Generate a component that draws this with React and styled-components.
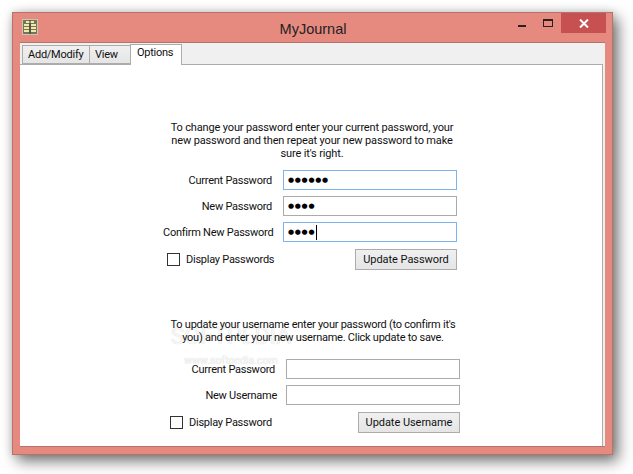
import React from 'react';
import styled, { createGlobalStyle } from 'styled-components';

const GlobalStyle = createGlobalStyle`
  html, body {
    margin: 0;
    padding: 0;
    background: #fff;
  }
  * {
    box-sizing: border-box;
  }
`;

const Page = styled.div`
  width: 633px;
  height: 474px;
  padding: 12px 0 0 12px;
  overflow: hidden;
  font-family: Roboto, "Liberation Sans", Arial, sans-serif;
  font-size: 11px;
  letter-spacing: -0.25px;
  color: #111;
`;

const Window = styled.div`
  width: 601px;
  height: 443px;
  display: flex;
  flex-direction: column;
  background: #e68a7f;
  border: 1px solid #b5736b;
  box-shadow: 5px 6px 14px rgba(0, 0, 0, 0.55), 0 0 8px rgba(0, 0, 0, 0.14);
`;

const TitleBar = styled.div`
  height: 29px;
  flex: none;
  display: grid;
  grid-template-columns: 1fr auto 1fr;
  align-items: center;
  padding: 0 6px 0 9px;
`;

const AppIcon = styled.svg`
  width: 16px;
  height: 16px;
  display: block;
  margin-top: -1px;
`;

const Title = styled.div`
  font-family: "Liberation Sans", Arial, sans-serif;
  font-size: 14.5px;
  letter-spacing: 0;
  color: #222;
  position: relative;
  top: 1px;
  left: -1px;
`;

const Controls = styled.div`
  justify-self: end;
  align-self: start;
  display: flex;
  align-items: flex-start;
`;

const ControlButton = styled.div`
  width: ${(p) => p.$width}px;
  height: 20px;
  display: flex;
  align-items: center;
  justify-content: center;
  background: ${(p) => (p.$close ? '#c75050' : 'transparent')};
`;

const MinGlyph = styled.div`
  width: 8px;
  height: 2px;
  margin-top: 5px;
  background: #2a2020;
`;

const MaxGlyph = styled.div`
  width: 10px;
  height: 8px;
  border: 1px solid #2a2020;
  border-top-width: 2px;
`;

const Client = styled.div`
  width: 585px;
  height: 405px;
  margin-left: 7px;
  display: flex;
  flex-direction: column;
  background: #f0f0f0;
  border-top: 1px solid #b5736b;
  border-bottom: 1px solid #b5736b;
`;

const TabStrip = styled.div`
  height: 21px;
  flex: none;
  display: flex;
  align-items: flex-end;
  padding-left: 2px;
  position: relative;
  z-index: 1;
`;

const Tab = styled.div`
  height: ${(p) => (p.$active ? 21 : 19)}px;
  width: ${(p) => p.$width}px;
  margin-left: ${(p) => (p.$first ? 0 : -1)}px;
  padding: ${(p) => (p.$active ? '1px 0 0 6px' : '2px 0 0 5px')};
  background: ${(p) => (p.$active ? '#fff' : 'linear-gradient(#f0f0f0, #e5e5e5)')};
  border: 1px solid #acacac;
  border-bottom: ${(p) => (p.$active ? 'none' : '1px solid #acacac')};
  position: relative;
  margin-bottom: ${(p) => (p.$active ? -1 : 0)}px;
`;

const Panel = styled.div`
  width: 583px;
  flex: 1;
  background: #fff;
  border-top: 1px solid #acacac;
  border-right: 1px solid #acacac;
  position: relative;
`;

const Section = styled.div`
  width: ${(p) => p.$width}px;
  margin-left: ${(p) => p.$left}px;
  padding-top: ${(p) => p.$top}px;
  position: relative;
`;

const Intro = styled.p`
  margin: 0 0 ${(p) => p.$gap}px ${(p) => p.$indent}px;
  width: ${(p) => p.$width}px;
  text-align: center;
  line-height: 13px;
  letter-spacing: ${(p) => p.$spacing}px;
`;

const FormRow = styled.div`
  display: grid;
  grid-template-columns: minmax(0, 1fr) 174px;
  column-gap: 11px;
  align-items: center;
  height: 20px;
  margin-bottom: 6px;
`;

const Label = styled.label`
  text-align: right;
  white-space: nowrap;
  margin-right: ${(p) => p.$pull || 0}px;
`;

const Field = styled.div`
  height: 20px;
  display: flex;
  align-items: center;
  padding-left: 4px;
  border: 1px solid ${(p) => (p.$focus ? '#7eb4ea' : '#ababab')};
  background: #fff;
  font-family: "DejaVu Sans", sans-serif;
  font-size: 7px;
  letter-spacing: 0.7px;
  color: #000;
`;

const Caret = styled.span`
  width: 1px;
  height: 15px;
  margin-left: 1px;
  background: #000;
`;

const ActionRow = styled.div`
  display: flex;
  align-items: center;
  justify-content: space-between;
  margin-top: 7px;
  padding-left: 4px;
  height: 21px;
`;

const CheckLabel = styled.div`
  display: flex;
  align-items: center;
  gap: 6px;
`;

const CheckBox = styled.span`
  width: 13px;
  height: 13px;
  border: 1px solid #333;
  background: #fff;
`;

const ActionButton = styled.div`
  width: 102px;
  height: 21px;
  display: flex;
  align-items: center;
  justify-content: center;
  letter-spacing: -0.05px;
  border: 1px solid #acacac;
  background: linear-gradient(#f0f0f0, #e5e5e5);
`;

const Watermark = styled.div`
  position: absolute;
  left: 150px;
  top: 261px;
  width: 122px;
  color: #f6f6f6;
  text-align: center;
  text-shadow: 0 0 1px #cfcfcf;
  pointer-events: none;
  white-space: nowrap;
`;

const WatermarkBig = styled.div`
  font-size: 23px;
  letter-spacing: 0;
  line-height: 22px;
`;

const WatermarkSmall = styled.div`
  font-size: 10.5px;
  letter-spacing: 0;
  line-height: 12px;
  margin-top: 7px;
`;

function JournalIcon() {
  return (
    <AppIcon viewBox="0 0 16 16">
      <rect x="0" y="0" width="16" height="16" fill="#c8c6b4" />
      <rect x="1" y="1" width="14" height="14" fill="#77745a" />
      <rect x="4" y="2" width="8" height="2" fill="#f1e9a8" />
      <rect x="2" y="5" width="5" height="2" fill="#f1e9a8" />
      <rect x="9" y="5" width="5" height="2" fill="#f1e9a8" />
      <rect x="2" y="8" width="5" height="2" fill="#f1e9a8" />
      <rect x="9" y="8" width="5" height="2" fill="#f1e9a8" />
      <rect x="2" y="11" width="5" height="2" fill="#f1e9a8" />
      <rect x="9" y="11" width="5" height="2" fill="#f1e9a8" />
      <rect x="7.5" y="1" width="1" height="14" fill="#3a3828" />
    </AppIcon>
  );
}

function CloseGlyph() {
  return (
    <svg width="10" height="9" viewBox="0 0 10 9">
      <path d="M1 0.5 L9 8.5 M9 0.5 L1 8.5" stroke="#fff" strokeWidth="2" />
    </svg>
  );
}

const App = () => {
  return (
    <Page>
      <GlobalStyle />
      <Window>
        <TitleBar>
          <JournalIcon />
          <Title>MyJournal</Title>
          <Controls>
            <ControlButton $width={27}><MinGlyph /></ControlButton>
            <ControlButton $width={26}><MaxGlyph /></ControlButton>
            <ControlButton $width={45} $close><CloseGlyph /></ControlButton>
          </Controls>
        </TitleBar>
        <Client>
          <TabStrip>
            <Tab $first $width={68}>Add/Modify</Tab>
            <Tab $width={42}>View</Tab>
            <Tab $active $width={52}>Options</Tab>
          </TabStrip>
          <Panel>
            <Watermark>
              <WatermarkBig>SOFTPEDIA</WatermarkBig>
              <WatermarkSmall>www.softpedia.com</WatermarkSmall>
            </Watermark>
            <Section $left={143} $width={294} $top={56}>
              <Intro $gap={10} $indent={4} $width={290} $spacing={-0.15}>
                To change your password enter your current password, your new password and then repeat your new password to make sure it's right.
              </Intro>
              <FormRow>
                <Label>Current Password</Label>
                <Field $focus>●●●●●●</Field>
              </FormRow>
              <FormRow>
                <Label>New Password</Label>
                <Field>●●●●</Field>
              </FormRow>
              <FormRow>
                <Label>Confirm New Password</Label>
                <Field $focus>●●●●<Caret /></Field>
              </FormRow>
              <ActionRow>
                <CheckLabel>
                  <CheckBox />
                  Display Passwords
                </CheckLabel>
                <ActionButton>Update Password</ActionButton>
              </ActionRow>
            </Section>
            <Section $left={146} $width={294} $top={48}>
              <Intro $gap={15} $indent={0} $width={294} $spacing={-0.25}>
                To update your username enter your password (to confirm it's you) and enter your new username. Click update to save.
              </Intro>
              <FormRow>
                <Label>Current Password</Label>
                <Field />
              </FormRow>
              <FormRow>
                <Label $pull={-2}>New Username</Label>
                <Field />
              </FormRow>
              <ActionRow>
                <CheckLabel>
                  <CheckBox />
                  Display Password
                </CheckLabel>
                <ActionButton>Update Username</ActionButton>
              </ActionRow>
            </Section>
          </Panel>
        </Client>
      </Window>
    </Page>
  );
};

export default App;
